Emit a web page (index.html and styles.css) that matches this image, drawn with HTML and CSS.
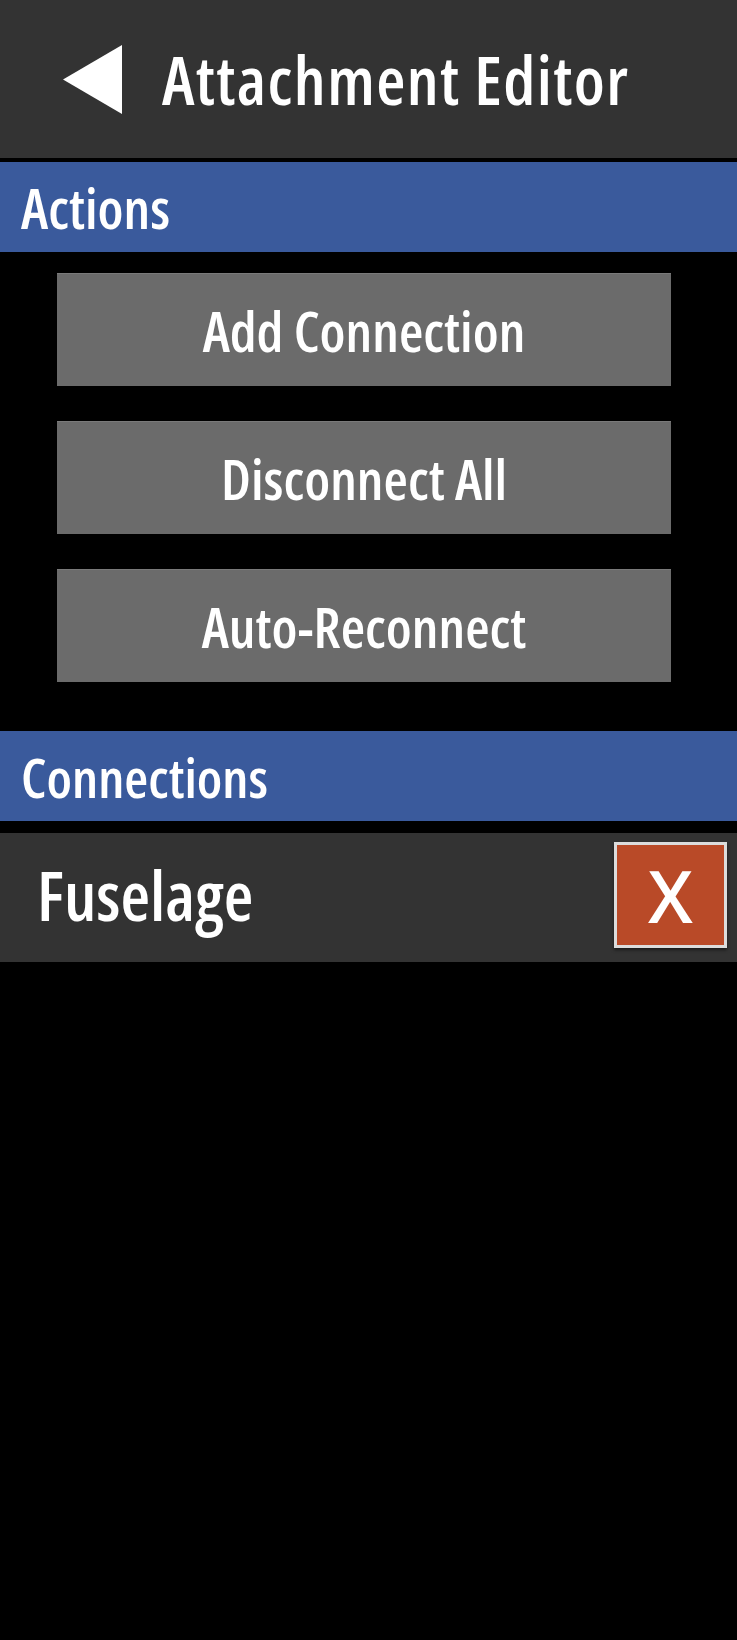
FILE: index.html
```html
<!DOCTYPE html>
<html lang="en">
<head>
<meta charset="utf-8">
<title>Attachment Editor</title>
<link rel="stylesheet" href="styles.css">
</head>
<body>
<header class="topbar">
  <svg class="back-icon" width="59" height="69" viewBox="0 0 59 69" aria-hidden="true">
    <polygon points="0,34.5 59,0 59,69" fill="#ffffff"/>
  </svg>
  <h1 class="title">Attachment Editor</h1>
</header>

<div class="section-head">Actions</div>
<div class="actions">
  <button class="action-btn">Add Connection</button>
  <button class="action-btn">Disconnect All</button>
  <button class="action-btn">Auto-Reconnect</button>
</div>

<div class="section-head section-head--conn">Connections</div>
<div class="conn-row">
  <span class="conn-name">Fuselage</span>
  <button class="remove-btn">X</button>
</div>
</body>
</html>
```
FILE: styles.css
```css
html, body {
  margin: 0;
  padding: 0;
  background: #000000;
}
body {
  font-family: "Open Sans", "Roboto Condensed", sans-serif;
  font-stretch: 75%;
  font-weight: 600;
  color: #ffffff;
  width: 737px;
  min-height: 1640px;
}
.topbar {
  height: 158px;
  background: #333333;
  display: flex;
  align-items: center;
  padding-left: 63px;
  margin-bottom: 4px;
  box-sizing: border-box;
}
.back-icon {
  flex: none;
  margin-right: 40px;
}
.title {
  margin: 0;
  font-size: 67px;
  font-weight: 600;
  letter-spacing: 1.4px;
  line-height: 1;
  white-space: nowrap;
}
.section-head {
  height: 90px;
  background: #3a5a9c;
  display: flex;
  align-items: center;
  padding-left: 21px;
  font-size: 56px;
  font-weight: 600;
  line-height: 1;
  box-sizing: border-box;
}
.section-head--conn {
  margin-bottom: 12px;
  font-size: 55px;
}
.actions {
  display: flex;
  flex-direction: column;
  gap: 35px;
  padding: 21px 66px 0 57px;
  margin-bottom: 49px;
}
.action-btn {
  height: 113px;
  border: none;
  border-top: 1px solid #7a7a7a;
  background: #6b6b6b;
  color: #ffffff;
  font-family: inherit;
  font-stretch: inherit;
  font-size: 56px;
  font-weight: 600;
  line-height: 1;
  padding: 0;
  margin: 0;
}
.conn-row {
  height: 129px;
  background: #333333;
  display: flex;
  align-items: center;
  justify-content: space-between;
  padding: 9px 10px 14px 37px;
  box-sizing: border-box;
}
.conn-name {
  font-size: 68px;
  font-weight: 600;
  line-height: 1;
}
.remove-btn {
  width: 113px;
  height: 106px;
  box-sizing: border-box;
  border: 3px solid #dcdcdc;
  background: #b94a28;
  color: #ffffff;
  font-family: inherit;
  font-stretch: 100%;
  font-size: 72px;
  font-weight: 600;
  line-height: 1;
  padding: 0;
  margin: 0;
  box-shadow: 0 2px 3px rgba(0,0,0,0.5);
}
```
